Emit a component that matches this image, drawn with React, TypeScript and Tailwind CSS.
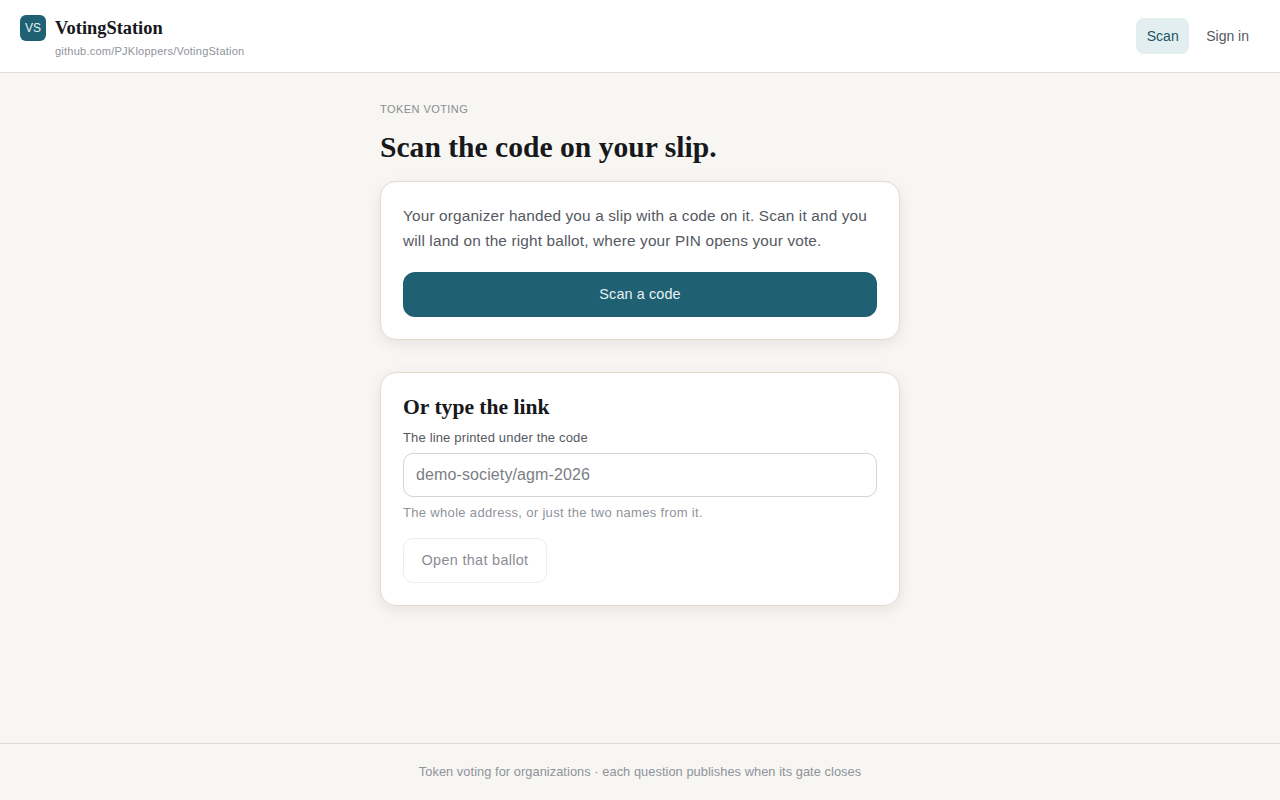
const serif = "font-['Liberation_Serif',serif] font-bold text-[#16181c]";
const card = "bg-white border border-[#e3dccf] rounded-2xl shadow-[0_4px_14px_rgba(30,30,20,0.08)] p-[22px]";

export default function App() {
  return (
    <div className="min-h-[800px] flex flex-col bg-[#f7f6f2] text-[#16181c] font-['Liberation_Sans',Arial,sans-serif]">
      {/* Header */}
      <header className="h-[73px] bg-white border-b border-[#e2dfd8] flex items-center justify-between px-5">
        <div className="flex items-start gap-[9px] -mt-[1px]">
          <div className="w-[26px] h-[26px] mt-[1px] rounded-[6px] bg-[#1f6073] text-[#e4f0f3] text-[12px] flex items-center justify-center">
            VS
          </div>
          <div className="flex flex-col">
            <span className={`${serif} text-[18.4px] leading-[26px] mt-[1px]`}>VotingStation</span>
            <span className="text-[11px] leading-[14px] mt-[3px] tracking-[0.022em] text-[#8f939b]">
              github.com/PJKloppers/VotingStation
            </span>
          </div>
        </div>
        <nav className="flex items-center gap-[6px]">
          <a className="h-9 px-[10.5px] rounded-lg bg-[#e3eef0] text-[#1a5566] text-sm flex items-center">Scan</a>
          <a className="h-9 px-[11px] rounded-lg text-[#555962] text-sm flex items-center">Sign in</a>
        </nav>
      </header>

      {/* Content */}
      <main className="flex-1 w-[520px] mx-auto pt-[29px]">
        <p className="text-[11px] leading-[14px] tracking-[0.04em] text-[#8a8d93]">TOKEN VOTING</p>
        <h1 className={`${serif} text-[29.6px] leading-[38px] mt-3 mb-[15px]`}>Scan the code on your slip.</h1>

        <section className={card}>
          <p className="text-[15.36px] leading-[25px] -mt-[1px] tracking-[0.01em] text-[#555962]">
            Your organizer handed you a slip with a code on it. Scan it and you will land on the right ballot, where your PIN opens your vote.
          </p>
          <button className="w-full h-[45px] mt-[19px] rounded-xl bg-[#1f6073] text-[#e9f3f5] text-[14.4px] tracking-[0.008em]">
            Scan a code
          </button>
        </section>

        <section className={`${card} mt-8`}>
          <h2 className={`${serif} text-[21.6px] leading-[24px]`}>Or type the link</h2>
          <label className="block text-[13px] leading-4 mt-[11px] tracking-[0.012em] text-[#555962]">
            The line printed under the code
          </label>
          <input
            readOnly
            placeholder="demo-society/agm-2026"
            className="block w-full h-11 mt-[7px] rounded-[10px] border border-[#d4d4d4] px-3 text-base tracking-[0.007em] placeholder:text-[#7b7e84] outline-none"
          />
          <p className="text-[13px] leading-4 mt-2 tracking-[0.025em] text-[#8f939b]">
            The whole address, or just the two names from it.
          </p>
          <button
            disabled
            className="block h-[45px] w-[144px] mt-[17px] rounded-[10px] border border-[#ececec] text-[#8a8d93] text-[14.4px] tracking-[0.023em]"
          >
            Open that ballot
          </button>
        </section>
      </main>

      {/* Footer */}
      <footer className="h-[57px] border-t border-[#dcdad4] flex items-center justify-center text-[12.8px] tracking-[0.005em] text-[#8f939b]">
        Token voting for organizations · each question publishes when its gate closes
      </footer>
    </div>
  );
}
